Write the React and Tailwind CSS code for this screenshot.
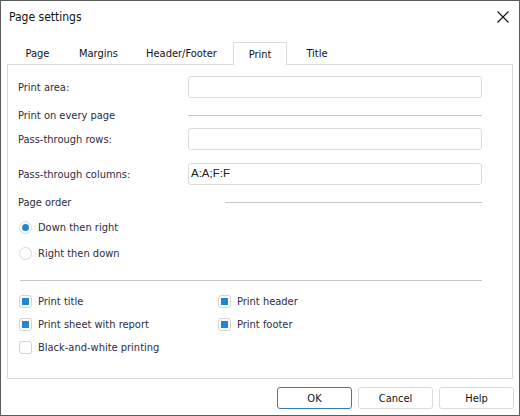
import React from "react";

const font = { fontFamily: '"DejaVu Sans Condensed", "Noto Sans", sans-serif' };

function Checkbox({ checked, label }) {
  return (
    <div className="flex items-center h-[14px]">
      <div className="w-[13px] h-[13px] ml-[1px] border border-[#d4d4d4] rounded-[3px] bg-white flex items-center justify-center">
        {checked && <div className="w-[7px] h-[7px] bg-[#1f87d2]" />}
      </div>
      <span className="ml-[6px] text-[11px] text-[#2c2c40] leading-none">{label}</span>
    </div>
  );
}

function Radio({ checked, label }) {
  return (
    <div className="flex items-center h-[14px]">
      <div className="w-[13px] h-[13px] ml-[1px] border border-[#d8d8d8] rounded-full bg-white flex items-center justify-center">
        {checked && <div className="w-[7px] h-[7px] rounded-full bg-[#1f87d2]" />}
      </div>
      <span className="ml-[6px] text-[11px] text-[#2c2c40] leading-none">{label}</span>
    </div>
  );
}

function InputRow({ label, value, mt }) {
  return (
    <div className={`flex items-center h-[22px] ${mt}`}>
      <span className="w-[170px] text-[11px] text-[#2c2c40] leading-none">{label}</span>
      <div className="w-[294px] h-[22px] border border-[#dcdcdc] rounded-[3px] flex items-center px-[2px]">
        {value && (
          <span
            className="text-[11.5px] text-[#202020] leading-none"
            style={{ fontFamily: '"Liberation Sans", Arial, sans-serif' }}
          >
            {value}
          </span>
        )}
      </div>
    </div>
  );
}

export default function App() {
  const tabs = [
    { name: "Page", w: "w-[59px]" },
    { name: "Margins", w: "w-[63px]" },
    { name: "Header/Footer", w: "w-[103px]" },
    { name: "Print", w: "w-[54px]", active: true },
    { name: "Title", w: "w-[60px]" },
  ];
  return (
    <div
      className="w-[520px] h-[416px] border border-[#5c5c5c] bg-white flex flex-col"
      style={font}
    >
      {/* Title bar */}
      <div className="h-[29px] flex items-center justify-between pl-[8px] pr-[9px]">
        <span className="text-[12px] text-[#111] leading-none mt-[2px]">Page settings</span>
        <svg width="14" height="14" viewBox="0 0 14 14" className="mt-[2px]">
          <path d="M1.5 1.5 L12.5 12.5 M12.5 1.5 L1.5 12.5" stroke="#111" strokeWidth="1.1" />
        </svg>
      </div>

      {/* Tabs */}
      <div className="flex mt-[12px] ml-[7px] h-[23px] relative z-10 -mb-px">
        {tabs.map((t) => (
          <div
            key={t.name}
            className={`${t.w} h-[23px] flex items-center justify-center text-[11px] text-[#111] leading-none ${
              t.active ? "border border-b-0 border-[#d9d9d9] bg-white" : ""
            }`}
          >
            {t.name}
          </div>
        ))}
      </div>

      {/* Panel */}
      <div className="mx-[6px] h-[315px] border border-[#d9d9d9] pl-[10px] pr-[29px] flex flex-col">
        <InputRow label="Print area:" mt="mt-[11px]" />

        <div className="flex items-center h-[14px] mt-[10px]">
          <span className="w-[170px] text-[11px] text-[#2c2c40] leading-none">Print on every page</span>
          <div className="w-[294px] h-px bg-[#c8c8c8]" />
        </div>

        <InputRow label="Pass-through rows:" mt="mt-[6px]" />
        <InputRow label="Pass-through columns:" value="A:A;F:F" mt="mt-[13px]" />

        <div className="flex items-center h-[14px] mt-[10px]">
          <span className="w-[207px] text-[11px] text-[#2c2c40] leading-none">Page order</span>
          <div className="w-[257px] h-px bg-[#c8c8c8]" />
        </div>

        <div className="mt-[11px]">
          <Radio checked label="Down then right" />
        </div>
        <div className="mt-[12px]">
          <Radio label="Right then down" />
        </div>

        <div className="mt-[20px] ml-[2px] w-[462px] h-px bg-[#c8c8c8]" />

        <div className="grid grid-cols-[199px_1fr] mt-[13px] gap-y-[9px]">
          <Checkbox checked label="Print title" />
          <Checkbox checked label="Print header" />
          <Checkbox checked label="Print sheet with report" />
          <Checkbox checked label="Print footer" />
          <Checkbox label="Black-and-white printing" />
        </div>
      </div>

      {/* Buttons */}
      <div className="flex justify-end gap-[6px] mt-[8px] pr-[5px]">
        <button className="w-[75px] h-[22px] border border-[#2f7cc0] rounded-[3px] bg-white text-[11px] text-[#111] leading-none">
          OK
        </button>
        <button className="w-[75px] h-[22px] border border-[#dcdcdc] rounded-[3px] bg-white text-[11px] text-[#111] leading-none">
          Cancel
        </button>
        <button className="w-[75px] h-[22px] border border-[#dcdcdc] rounded-[3px] bg-white text-[11px] text-[#111] leading-none">
          Help
        </button>
      </div>
    </div>
  );
}
